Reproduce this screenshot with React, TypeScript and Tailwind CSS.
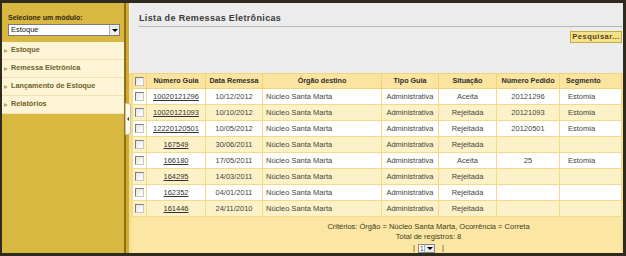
import React from 'react';

const menu = ["Estoque", "Remessa Eletrônica", "Lançamento de Estoque", "Relatórios"];

const rows = [
    { guia: "10020121296", data: "10/12/2012", tipo: "Administrativa", sit: "Aceita", pedido: "20121296", seg: "Estomia" },
    { guia: "10020121093", data: "10/10/2012", tipo: "Administrativa", sit: "Rejeitada", pedido: "20121093", seg: "Estomia" },
    { guia: "12220120501", data: "10/05/2012", tipo: "Administrativa", sit: "Rejeitada", pedido: "20120501", seg: "Estomia" },
    { guia: "167549", data: "30/06/2011", tipo: "Administrativa", sit: "Rejeitada", pedido: "", seg: "" },
    { guia: "166180", data: "17/05/2011", tipo: "Administrativa", sit: "Aceita", pedido: "25", seg: "Estomia" },
    { guia: "164295", data: "14/03/2011", tipo: "Administrativa", sit: "Rejeitada", pedido: "", seg: "" },
    { guia: "162352", data: "04/01/2011", tipo: "Administrativa", sit: "Rejeitada", pedido: "", seg: "" },
    { guia: "161446", data: "24/11/2010", tipo: "Administrativa", sit: "Rejeitada", pedido: "", seg: "" },
];

function Check() {
    return <span className="block mx-auto w-[9px] h-[9px] border border-t-[#7d7d7d] border-l-[#7d7d7d] border-r-[#c8c8c8] border-b-[#c8c8c8] bg-gradient-to-br from-[#e6e6e6] to-white" />;
}

function DropBtn() {
    return (
        <span className="w-[10px] h-full flex items-center justify-center bg-[#ececec] border-l border-[#b0b0b0]">
            <span className="w-0 h-0 border-l-[3px] border-r-[3px] border-t-[3px] border-l-transparent border-r-transparent border-t-black" />
        </span>
    );
}

export default function App() {
    return (
        <div className="w-[626px] h-[256px] bg-[#2e2a1d] pt-[3px] pl-[2px] pr-[3px] pb-[3px] flex font-['Liberation_Sans',Arial,sans-serif]">
            {/* left menu */}
            <aside className="w-[123px] bg-[#d9b842] flex flex-col pt-[10px]">
                <div className="pl-[6px] text-[7px] leading-[9px] font-bold text-[#2f2508]">Selecione um módulo:</div>
                <div className="ml-[6px] mt-[2px] w-[112px] h-[12px] bg-white border border-[#7a7a7a] flex items-stretch">
                    <span className="flex-1 pl-[2px] text-[7.5px] leading-[10px] text-[#222]">Estoque</span>
                    <DropBtn />
                </div>
                <ul className="mt-[6px]">
                    {menu.map((m) => (
                        <li key={m} className="h-[18px] bg-[#fdf5d6] border-b border-[#efe3b4] flex items-center pl-[2px] gap-[3px]">
                            <span className="w-0 h-0 border-t-[2.5px] border-b-[2.5px] border-l-[4px] border-t-transparent border-b-transparent border-l-[#b3a96d]" />
                            <span className="text-[7.3px] font-bold text-[#6f6128]">{m}</span>
                        </li>
                    ))}
                </ul>
            </aside>

            {/* splitter */}
            <div className="relative w-[5px] flex">
                <div className="w-[2px] bg-[#8e6d16]" />
                <div className="w-[3px] bg-[#d3aa33]" />
                <div className="absolute left-[1px] top-[100px] w-[6px] h-[32px] bg-[#fffbea] border border-[#c9c2a0] rounded-r-[3px] flex items-center justify-center">
                    <span className="w-0 h-0 border-t-[2px] border-b-[2px] border-r-[2px] border-t-transparent border-b-transparent border-r-[#333]" />
                </div>
            </div>

            {/* main panel */}
            <main className="flex-1 flex flex-col bg-[#f4df92]">
                <div className="h-[70px] bg-[#ececec] border-l border-[#fafafa] pl-[9px] pr-[1px] pt-[9px]">
                    <div className="text-[9px] leading-[12px] font-bold tracking-[0.35px] text-[#3a3a3a] pb-[2px] border-b border-[#b8b8b8] mr-[0px]">
                        Lista de Remessas Eletrônicas
                    </div>
                    <div className="flex justify-end mt-[4px]">
                        <button className="h-[12px] px-[1px] bg-[#f5e188] border border-[#c6ad3c] text-[7.5px] leading-[10px] font-bold tracking-[0.5px] text-[#4d4515]">
                            Pesquisar...
                        </button>
                    </div>
                </div>

                <div className="pl-[3px] pr-[1px] flex-1 flex flex-col">
                    <table className="table-fixed border-collapse w-[489px] text-[7.5px] text-[#444]">
                        <colgroup>
                            <col className="w-[14px]" />
                            <col className="w-[59px]" />
                            <col className="w-[57px]" />
                            <col className="w-[119px]" />
                            <col className="w-[57px]" />
                            <col className="w-[58px]" />
                            <col className="w-[63px]" />
                            <col className="w-[62px]" />
                        </colgroup>
                        <thead>
                            <tr className="h-[15px] bg-[#fbe4a0] text-[7.2px] font-bold text-[#2e2e2e]">
                                <th className="border border-[#efd47a]"><Check /></th>
                                <th className="border border-[#efd47a] text-center">Número Guia</th>
                                <th className="border border-[#efd47a] text-center">Data Remessa</th>
                                <th className="border border-[#efd47a] text-center">Órgão destino</th>
                                <th className="border border-[#efd47a] text-center">Tipo Guia</th>
                                <th className="border border-[#efd47a] text-center">Situação</th>
                                <th className="border border-[#efd47a] text-center">Número Pedido</th>
                                <th className="border border-[#efd47a] text-left pl-[6px]">Segmento</th>
                            </tr>
                        </thead>
                        <tbody>
                            {rows.map((r, i) => (
                                <tr key={r.guia} className={`h-[16px] ${i % 2 === 0 ? 'bg-white' : 'bg-[#fdf1c8]'}`}>
                                    <td className="border border-[#f1da8a]"><Check /></td>
                                    <td className="border border-[#f1da8a] text-center underline text-[#333]">{r.guia}</td>
                                    <td className="border border-[#f1da8a] text-center">{r.data}</td>
                                    <td className="border border-[#f1da8a] pl-[3px]">Núcleo Santa Marta</td>
                                    <td className="border border-[#f1da8a] text-center">{r.tipo}</td>
                                    <td className="border border-[#f1da8a] text-center">{r.sit}</td>
                                    <td className="border border-[#f1da8a] text-center">{r.pedido}</td>
                                    <td className="border border-[#f1da8a] pl-[8px]">{r.seg}</td>
                                </tr>
                            ))}
                        </tbody>
                    </table>
                    <div className="flex-1 bg-[#fbe7a3] w-[489px] pl-[104px] pt-[5px] flex flex-col items-center text-[7.5px] leading-[10px] text-[#3d3a1e]">
                        <div>Critérios: Órgão = Núcleo Santa Marta, Ocorrência = Correta</div>
                        <div>Total de registros: 8</div>
                        <div className="flex items-center gap-[3px] mt-[1px]">
                            <span>|</span>
                            <span className="h-[9px] w-[17px] bg-white border border-[#888] flex items-stretch">
                                <span className="flex-1 text-[6.5px] leading-[8px] pl-[1px]">1</span>
                                <DropBtn />
                            </span>
                            <span className="ml-[4px]">|</span>
                        </div>
                    </div>
                </div>
            </main>
        </div>
    );
}
